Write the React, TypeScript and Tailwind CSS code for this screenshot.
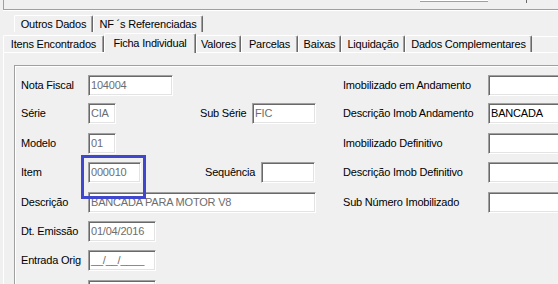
const FONT = "font-['Liberation_Sans',Arial,sans-serif]";

function Field({
  w,
  value,
  dark,
}: {
  w: string;
  value?: string;
  dark?: boolean;
}) {
  return (
    <div
      className={`${w} h-[21px] shrink-0 bg-white border border-t-[#a0a0a0] border-l-[#a0a0a0] border-b-white border-r-white shadow-[inset_1px_1px_0_#696969,inset_-1px_-1px_0_#e3e3e3] pl-[2px] leading-[19px] whitespace-nowrap overflow-hidden ${
        dark ? "text-black" : "text-[#6d6d6d]"
      }`}
    >
      {value}
    </div>
  );
}

function Label({ w, children }: { w: string; children: React.ReactNode }) {
  return (
    <div className={`${w} shrink-0 leading-[21px] whitespace-nowrap`}>
      {children}
    </div>
  );
}

function Tab({
  w,
  label,
  selected,
}: {
  w: string;
  label: string;
  selected?: boolean;
}) {
  if (selected) {
    return (
      <div
        className={`${w} h-[20px] -mb-[1px] shrink-0 bg-[#f0f0f0] border-t border-l border-t-white border-l-white border-r border-r-[#696969] shadow-[inset_-1px_0_0_#a0a0a0] rounded-tl-[2px] rounded-tr-[2px] text-center leading-[18px] whitespace-nowrap`}
      >
        {label}
      </div>
    );
  }
  return (
    <div
      className={`${w} h-[17px] shrink-0 bg-[#f0f0f0] border-t border-l border-t-white border-l-white border-r border-r-[#696969] shadow-[inset_-1px_0_0_#a0a0a0] rounded-tl-[2px] rounded-tr-[2px] text-center leading-[17px] whitespace-nowrap`}
    >
      {label}
    </div>
  );
}

export default function App() {
  return (
    <div
      className={`${FONT} w-[558px] h-[284px] overflow-hidden bg-[#f0f0f0] text-[11px] tracking-[-0.2px] text-black`}
    >
      {/* Top strip (bottom of the upper frame) */}
      <div className="ml-[3px] h-[10px] border-l border-b border-[#a0a0a0] shadow-[0_1px_0_#fff] flex items-start">
        <div className="ml-[416px] w-[68px] h-[2px] bg-white border-b border-[#a0a0a0]" />
        <div className="ml-[38px] w-[1px] h-[3px] bg-[#696969]" />
      </div>

      {/* Tab row 1 */}
      <div className="mt-[5px] ml-[14px] flex h-[18px]">
        <Tab w="w-[79px]" label="Outros Dados" />
        <Tab w="w-[110px]" label="NF ´s Referenciadas" />
      </div>

      {/* Tab row 2 */}
      <div className="relative z-10 ml-[3px] flex items-end h-[19px]">
        <Tab w="w-[101px]" label="Itens Encontrados" />
        <Tab w="w-[92px]" label="Ficha Individual" selected />
        <Tab w="w-[45px]" label="Valores" />
        <Tab w="w-[57px]" label="Parcelas" />
        <Tab w="w-[43px]" label="Baixas" />
        <Tab w="w-[64px]" label="Liquidação" />
        <Tab w="w-[127px]" label="Dados Complementares" />
        <div className="flex-1 self-start mt-[3px] border-t border-white" />
      </div>

      {/* Tab panel */}
      <div className="ml-[3px] h-[240px] border-t border-l border-white">
        {/* Group box */}
        <div className="ml-[10px] mt-[12px] h-[230px] border-t border-l border-[#a0a0a0] shadow-[inset_1px_1px_0_#fff] pl-[6px] pt-[9px]">
          {/* Row 1 */}
          <div className="flex h-[28px]">
            <div className="w-[322px] flex shrink-0">
              <Label w="w-[67px]">Nota Fiscal</Label>
              <Field w="w-[85px]" value="104004" />
            </div>
            <Label w="w-[145px]">Imobilizado em Andamento</Label>
            <Field w="w-[80px]" />
          </div>

          {/* Row 2 */}
          <div className="flex h-[30px]">
            <div className="w-[322px] flex shrink-0">
              <Label w="w-[67px]">Série</Label>
              <Field w="w-[28px]" value="CIA" />
              <div className="ml-[84px] flex">
                <Label w="w-[52px]">Sub Série</Label>
                <Field w="w-[64px]" value="FIC" />
              </div>
            </div>
            <Label w="w-[145px]">Descrição Imob Andamento</Label>
            <Field w="w-[80px]" value="BANCADA" dark />
          </div>

          {/* Row 3 */}
          <div className="flex h-[29px]">
            <div className="w-[322px] flex shrink-0">
              <Label w="w-[67px]">Modelo</Label>
              <Field w="w-[28px]" value="01" />
            </div>
            <Label w="w-[145px]">Imobilizado Definitivo</Label>
            <Field w="w-[80px]" />
          </div>

          {/* Row 4 */}
          <div className="flex h-[30px]">
            <div className="w-[322px] flex shrink-0">
              <Label w="w-[67px]">Item</Label>
              <div className="relative">
                <Field w="w-[53px]" value="000010" />
                <span className="absolute -left-[7px] -right-[5px] -top-[7px] -bottom-[7px] border-[3px] border-[#3f48cc]" />
              </div>
              <div className="ml-[64px] flex">
                <Label w="w-[56px]">Sequência</Label>
                <Field w="w-[54px]" />
              </div>
            </div>
            <Label w="w-[145px]">Descrição Imob Definitivo</Label>
            <Field w="w-[80px]" />
          </div>

          {/* Row 5 */}
          <div className="flex h-[29px]">
            <div className="w-[322px] flex shrink-0">
              <Label w="w-[67px]">Descrição</Label>
              <Field w="w-[228px]" value="BANCADA PARA MOTOR V8" />
            </div>
            <Label w="w-[145px]">Sub Número Imobilizado</Label>
            <Field w="w-[80px]" />
          </div>

          {/* Row 6 */}
          <div className="flex h-[29px]">
            <Label w="w-[67px]">Dt. Emissão</Label>
            <Field w="w-[68px]" value="01/04/2016" />
          </div>

          {/* Row 7 */}
          <div className="flex h-[30px]">
            <Label w="w-[67px]">Entrada Orig</Label>
            <Field w="w-[68px]" value="__/__/____" />
          </div>

          {/* Row 8 (cut off) */}
          <div className="flex h-[29px]">
            <Label w="w-[67px]"> </Label>
            <Field w="w-[68px]" />
          </div>
        </div>
      </div>
    </div>
  );
}
